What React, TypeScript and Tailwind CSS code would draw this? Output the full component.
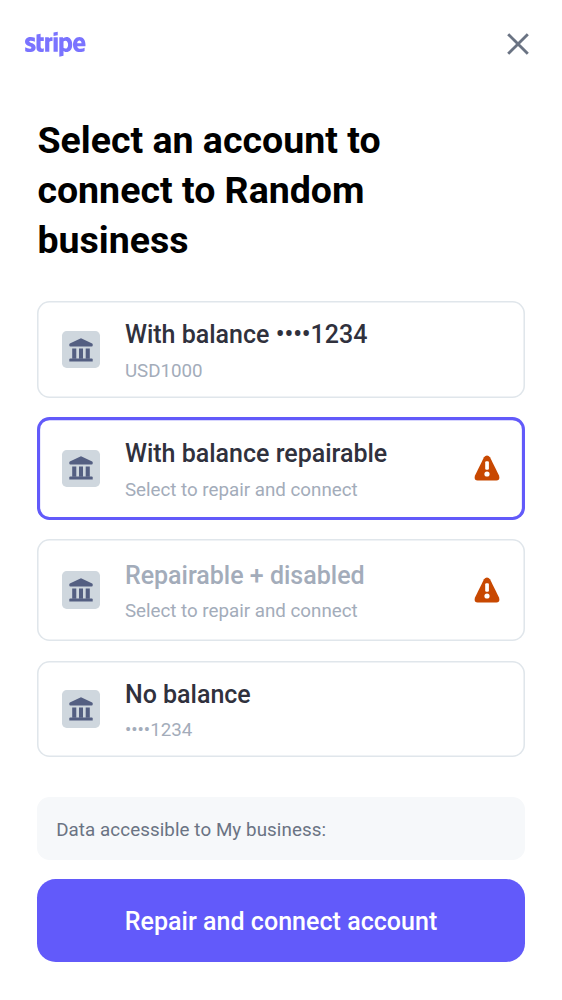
import { FaStripe } from "react-icons/fa";

type Account = {
  title: string;
  subtitle: string;
  warning?: boolean;
  selected?: boolean;
  disabled?: boolean;
};

const accounts: Account[] = [
  { title: "With balance ••••1234", subtitle: "USD1000" },
  { title: "With balance repairable", subtitle: "Select to repair and connect", warning: true, selected: true },
  { title: "Repairable + disabled", subtitle: "Select to repair and connect", warning: true, disabled: true },
  { title: "No balance", subtitle: "••••1234" },
];

function BankIcon() {
  return (
    <span className="flex h-[37.5px] w-[38px] shrink-0 items-center justify-center rounded-[4.7px] bg-[#cfd7de]">
      <svg viewBox="0 0 24 24" className="size-6" fill="#545f82">
        <path d="M12 .2 .8 5.6Q.3 5.9.3 6.5V7.4Q.3 8.5 1.4 8.5H22.6Q23.7 8.5 23.7 7.4V6.5Q23.7 5.9 23.2 5.6Z" />
        <path d="M3.2 10.6H7.3V20.8H3.2ZM10 10.6H14V20.8H10ZM16.7 10.6H20.8V20.8H16.7Z" />
        <path d="M1.3 20.5H22.7Q23.7 20.5 23.7 21.5V23.4H.3V21.5Q.3 20.5 1.3 20.5Z" />
      </svg>
    </span>
  );
}

function WarningIcon() {
  return (
    <svg viewBox="0 0 26 26" className="-mt-px h-[26px] w-[26px] shrink-0">
      <path
        d="M10 2.3Q11.3.5 13 .5T16 2.3L25 20.5Q26.4 25.3 22.5 25.5H3.5Q-.4 25.3 1 20.5Z"
        fill="#c84801"
      />
      <rect x="11.2" y="6.2" width="3.7" height="8.6" rx="1.2" fill="#fff" />
      <circle cx="13" cy="19" r="2.6" fill="#fff" />
    </svg>
  );
}

function AccountCard({ title, subtitle, warning, selected, disabled }: Account) {
  return (
    <button
      className={`flex w-full items-center rounded-[12.5px] px-[24.5px] text-left ${warning ? "h-[102.6px]" : "h-[96.6px]"} ${
        selected ? "shadow-[inset_0_0_0_3.125px_#625afa]" : "shadow-[inset_0_0_0_1.5625px_#e0e6eb]"
      }`}
    >
      <BankIcon />
      <span className="ml-[25px] flex flex-1 flex-col pt-[5px]">
        <span className={`text-[25px] leading-[37.5px] font-medium ${disabled ? "text-[#a3acba]" : "text-[#30313d]"}`}>
          {title}
        </span>
        <span className="text-[18.75px] leading-[34px] text-[#a3acba]">{subtitle}</span>
      </span>
      {warning && <WarningIcon />}
    </button>
  );
}

export default function App() {
  return (
    <div className="flex h-[1000px] w-[562px] flex-col bg-white font-['Roboto',sans-serif]">
      <header className="flex h-[87px] items-center justify-between pr-[32px] pl-[25px]">
        <FaStripe className="mt-px h-[48.4px] w-[60.5px] text-[#7a73ff]" />
        <button aria-label="Close">
          <svg viewBox="0 0 24 24" className="size-6" fill="none" stroke="#6a7383" strokeWidth="2.9">
            <path d="M2.2 2.2 21.8 21.8M21.8 2.2 2.2 21.8" />
          </svg>
        </button>
      </header>
      <main className="flex flex-col px-[37.4px] pt-[28px]">
        <h1 className="w-[380px] text-[37.5px] leading-[50px] font-bold text-black">
          Select an account to connect to Random business
        </h1>
        <div className="mt-[36.3px] flex flex-col gap-[19.2px]">
          {accounts.map((account) => (
            <AccountCard key={account.title} {...account} />
          ))}
        </div>
        <p className="mt-[39.8px] flex h-[62.8px] items-center rounded-[12.5px] bg-[#f6f8fa] px-[18.75px] pt-[3px] text-[18.75px] tracking-[0.085px] text-[#6a7383]">
          Data accessible to My business:
        </p>
        <button className="mt-[19px] h-[83.5px] rounded-[18.75px] bg-[#625afa] pt-[3px] text-[25px] font-medium tracking-[0.03px] text-white">
          Repair and connect account
        </button>
      </main>
    </div>
  );
}
